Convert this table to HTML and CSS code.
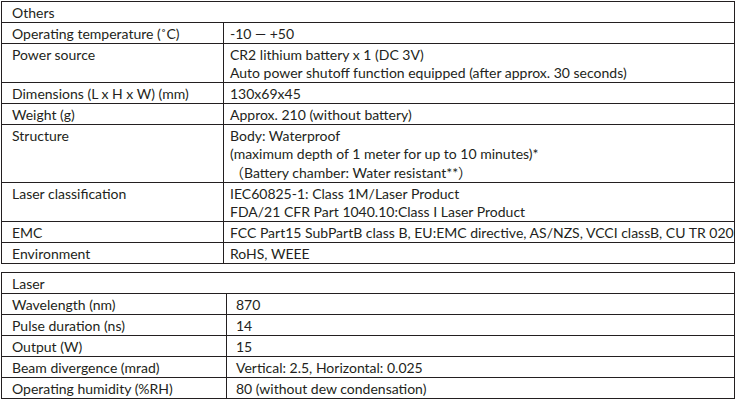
FILE: index.html
```html
<!DOCTYPE html>
<html>
<head>
<meta charset="utf-8">
<link rel="stylesheet" href="styles.css">
</head>
<body>
<div class="page">
<table class="spec spec-others">
  <colgroup><col class="c-label"><col class="c-value"></colgroup>
  <tr><td colspan="2" class="head">Others</td></tr>
  <tr><td>Operating temperature (˚C)</td><td class="val">-10 — +50</td></tr>
  <tr><td>Power source</td><td class="val">CR2 lithium battery x 1 (DC 3V)<br>Auto power shutoff function equipped (after approx. 30 seconds)</td></tr>
  <tr><td>Dimensions (L x H x W) (mm)</td><td class="val">130x69x45</td></tr>
  <tr><td>Weight (g)</td><td class="val">Approx. 210 (without battery)</td></tr>
  <tr><td>Structure</td><td class="val">Body: Waterproof<br>(maximum depth of 1 meter for up to 10 minutes)*<br><span class="fw">（</span>Battery chamber: Water resistant**<span class="fw">）</span></td></tr>
  <tr><td>Laser classification</td><td class="val">IEC60825-1: Class 1M/Laser Product<br>FDA/21 CFR Part 1040.10:Class I Laser Product</td></tr>
  <tr><td>EMC</td><td class="val">FCC Part15 SubPartB class B, EU:EMC directive, AS/NZS, VCCI classB, CU TR 020</td></tr>
  <tr><td>Environment</td><td class="val">RoHS, WEEE</td></tr>
</table>
<table class="spec spec-laser">
  <colgroup><col class="c-label2"><col class="c-value"></colgroup>
  <tr><td colspan="2" class="head">Laser</td></tr>
  <tr><td>Wavelength (nm)</td><td class="val2">870</td></tr>
  <tr><td>Pulse duration (ns)</td><td class="val2">14</td></tr>
  <tr><td>Output (W)</td><td class="val2">15</td></tr>
  <tr><td>Beam divergence (mrad)</td><td class="val2">Vertical: 2.5, Horizontal: 0.025</td></tr>
  <tr><td>Operating humidity (%RH)</td><td class="val2">80 (without dew condensation)</td></tr>
</table>
</div>
</body>
</html>
```

FILE: styles.css
```css
html, body {
  margin: 0;
  padding: 0;
  background: #ffffff;
}
.page {
  padding: 1px 0 0 1px;
  width: 734px;
  display: flex;
  flex-direction: column;
  gap: 8px;
}
.spec {
  border-collapse: collapse;
  width: 734px;
  table-layout: fixed;
  font-family: "Lato", "Noto Sans", sans-serif;
  font-size: 14px;
  color: #231f20;
}
.spec td {
  border: 1px solid #231f20;
  padding: 2px 6px 0 10px;
  height: 18px;
  line-height: 18px;
  vertical-align: top;
  white-space: nowrap;
  overflow: hidden;
}
.spec td.val {
  padding-left: 6px;
}
.spec td.val2 {
  padding-left: 9px;
}
.fw {
  font-family: "Noto Sans CJK JP", sans-serif;
  line-height: 18px;
}
.c-label { width: 222px; }
.c-label2 { width: 225px; }
```
